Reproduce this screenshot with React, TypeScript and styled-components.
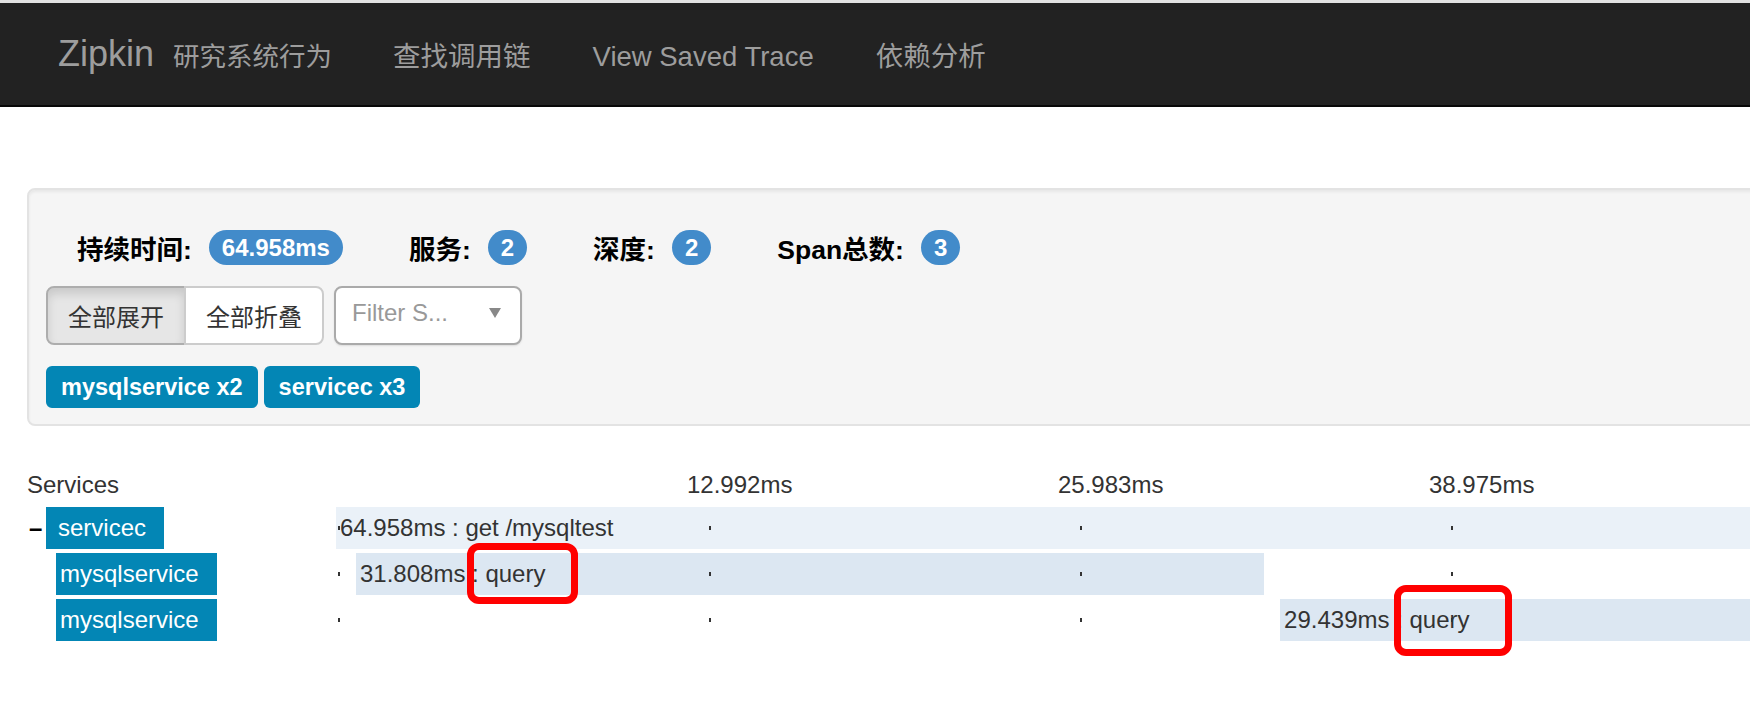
import React from 'react';
import styled, { createGlobalStyle } from 'styled-components';

const TOTAL = 64.958;
const SCALE = 1855 / TOTAL;
const TICKS = [0, 12.992, 25.983, 38.975, 51.966];

type Span = {
  service: string;
  depth: number;
  start: number;
  duration: number;
  label: string;
  tone: 'light' | 'mid';
};

const spans: Span[] = [
  { service: 'servicec', depth: 0, start: 0, duration: 64.958, label: '64.958ms : get /mysqltest', tone: 'light' },
  { service: 'mysqlservice', depth: 1, start: 0.7, duration: 31.808, label: '31.808ms : query', tone: 'mid' },
  { service: 'mysqlservice', depth: 1, start: 33.06, duration: 29.439, label: '29.439ms : query', tone: 'mid' },
];

const stats = [
  { label: '持续时间:', value: '64.958ms' },
  { label: '服务:', value: '2' },
  { label: '深度:', value: '2' },
  { label: 'Span总数:', value: '3' },
];

const App = () => {
  return (
    <>
      <GlobalStyle />
      <TopStrip />
      <Navbar>
        <Brand>Zipkin</Brand>
        <Subtitle>研究系统行为</Subtitle>
        <NavLinks>
          <NavLink>查找调用链</NavLink>
          <NavLink>View Saved Trace</NavLink>
          <NavLink>依赖分析</NavLink>
        </NavLinks>
      </Navbar>

      <Main>
        <Panel>
          <StatsRow>
            {stats.map((s) => (
              <StatItem key={s.label}>
                <StatLabel>{s.label}</StatLabel>
                <Badge>{s.value}</Badge>
              </StatItem>
            ))}
          </StatsRow>
          <Controls>
            <BtnGroup>
              <Btn $active>全部展开</Btn>
              <Btn>全部折叠</Btn>
            </BtnGroup>
            <FilterSelect>
              <span>Filter S...</span>
              <Caret />
            </FilterSelect>
          </Controls>
          <Tags>
            <Tag>mysqlservice x2</Tag>
            <Tag>servicec x3</Tag>
          </Tags>
        </Panel>

        <Trace>
          <HeaderRow>
            <ServiceCol>Services</ServiceCol>
            <TimeCell>
              {TICKS.slice(1, 4).map((t) => (
                <TickLabel key={t} style={{ left: t * SCALE - 20 }}>
                  {t.toFixed(3)}ms
                </TickLabel>
              ))}
            </TimeCell>
          </HeaderRow>

          <Rows>
            {spans.map((s, i) => (
              <Row key={i}>
                <ServiceCol>
                  {s.depth === 0 ? <Toggle>–</Toggle> : null}
                  <ServiceName $depth={s.depth}>{s.service}</ServiceName>
                </ServiceCol>
                <TimeCell>
                  <Bar
                    $tone={s.tone}
                    style={{ left: s.start * SCALE, width: s.duration * SCALE }}
                  />
                  {TICKS.map((t) => (
                    <Tick key={t} style={{ left: 2 + t * SCALE }} />
                  ))}
                  <BarText style={{ left: s.start * SCALE }}>{s.label}</BarText>
                </TimeCell>
              </Row>
            ))}
            <Mark style={{ left: 440, top: 36, width: 111, height: 61 }} />
            <Mark style={{ left: 1367, top: 78, width: 118, height: 71 }} />
          </Rows>
        </Trace>
      </Main>
    </>
  );
};

export default App;

const GlobalStyle = createGlobalStyle`
  html {
    overflow: hidden;
  }
  body {
    margin: 0;
    min-height: 706px;
    background: #fff;
    font-family: "Liberation Sans", "Noto Sans CJK SC", sans-serif;
    color: #333;
  }
`;

const TopStrip = styled.div`
  height: 3px;
  background: #e2e2e2;
`;

const Navbar = styled.nav`
  box-sizing: border-box;
  height: 104px;
  padding-left: 58px;
  background: #222;
  border-bottom: 2px solid #080808;
  color: #9d9d9d;
  font-size: 27px;
  line-height: 102px;
  white-space: nowrap;
  overflow: hidden;
`;

const Brand = styled.span`
  font-size: 36px;
  margin-right: 19px;
`;

const Subtitle = styled.span`
  font-size: 26.5px;
`;

const NavLinks = styled.span`
  margin-left: 30px;
`;

const NavLink = styled.a`
  font-size: 27.5px;
  padding: 0 31px;
`;

const Main = styled.div`
  padding-left: 27px;
`;

const Panel = styled.div`
  margin-top: 81px;
  margin-right: -40px;
  padding: 40px 17px 16px;
  background: #f5f5f5;
  border: 2px solid #e3e3e3;
  border-radius: 8px;
  box-shadow: inset 0 2px 3px rgba(0, 0, 0, 0.06);
`;

const StatsRow = styled.div`
  display: flex;
  align-items: center;
  gap: 66px;
  margin-left: 31px;
  height: 35px;
`;

const StatItem = styled.div`
  display: flex;
  align-items: center;
`;

const StatLabel = styled.span`
  font-size: 26.5px;
  font-weight: bold;
  color: #000;
`;

const Badge = styled.span`
  display: inline-flex;
  align-items: center;
  justify-content: center;
  height: 35px;
  min-width: 39px;
  box-sizing: border-box;
  margin-left: 17px;
  padding: 0 13px;
  border-radius: 18px;
  background: #428bca;
  color: #fff;
  font-size: 24px;
  font-weight: bold;
`;

const Controls = styled.div`
  display: flex;
  gap: 10px;
  margin-top: 21px;
`;

const BtnGroup = styled.div`
  display: flex;
`;

const Btn = styled.button<{ $active?: boolean }>`
  height: 59px;
  padding: 0 20px;
  font-family: inherit;
  font-size: 24px;
  color: #333;
  background: ${(p) => (p.$active ? '#e6e6e6' : '#fff')};
  border: 2px solid ${(p) => (p.$active ? '#adadad' : '#ccc')};
  box-shadow: ${(p) => (p.$active ? 'inset 0 6px 10px rgba(0, 0, 0, 0.125)' : 'none')};
  border-radius: 8px 0 0 8px;

  & + & {
    margin-left: -2px;
    border-radius: 0 8px 8px 0;
  }
`;

const FilterSelect = styled.div`
  display: flex;
  align-items: center;
  justify-content: space-between;
  box-sizing: border-box;
  width: 188px;
  height: 59px;
  padding: 0 19px 6px 16px;
  background: #fff;
  border: 2px solid #aaa;
  border-radius: 8px;
  box-shadow: 0 1px 2px rgba(0, 0, 0, 0.1);
  font-size: 24px;
  color: #999;
`;

const Caret = styled.span`
  width: 0;
  height: 0;
  border-left: 6px solid transparent;
  border-right: 6px solid transparent;
  border-top: 10px solid #888;
`;

const Tags = styled.div`
  display: flex;
  gap: 6px;
  margin-top: 21px;
`;

const Tag = styled.span`
  height: 42px;
  line-height: 42px;
  padding: 0 15px;
  border-radius: 6px;
  background: #0386b5;
  color: #fff;
  font-size: 23.5px;
  font-weight: bold;
`;

const Trace = styled.div`
  margin-top: 38px;
`;

const HeaderRow = styled.div`
  display: flex;
  align-items: center;
  height: 42px;
  font-size: 24px;
  color: #333;
`;

const ServiceCol = styled.div`
  display: flex;
  align-items: center;
  flex: 0 0 309px;
  height: 100%;
`;

const TimeCell = styled.div`
  position: relative;
  flex: 1;
  height: 100%;
`;

const TickLabel = styled.span`
  position: absolute;
  top: 0;
  line-height: 42px;
  white-space: nowrap;
`;

const Rows = styled.div`
  position: relative;
  margin-top: 1px;
`;

const Row = styled.div`
  display: flex;
  height: 42px;
  margin-bottom: 4px;
  font-size: 24px;
`;

const Toggle = styled.span`
  width: 17px;
  padding-left: 2px;
  font-weight: bold;
  color: #000;
`;

const ServiceName = styled.span<{ $depth: number }>`
  height: 42px;
  line-height: 42px;
  margin-left: ${(p) => (p.$depth > 0 ? '29px' : '0')};
  padding: 0 18px 0 ${(p) => (p.$depth > 0 ? '4px' : '12px')};
  background: #0386b5;
  color: #fff;
`;

const Bar = styled.div<{ $tone: 'light' | 'mid' }>`
  position: absolute;
  top: 0;
  bottom: 0;
  background: ${(p) => (p.$tone === 'light' ? '#eaf1f8' : '#dce7f2')};
`;

const Tick = styled.span`
  position: absolute;
  top: 19px;
  width: 2px;
  height: 4px;
  background: #333;
`;

const BarText = styled.span`
  position: absolute;
  top: 0;
  padding-left: 4px;
  line-height: 42px;
  white-space: nowrap;
  color: #333;
`;

const Mark = styled.div`
  position: absolute;
  box-sizing: border-box;
  border: 7px solid #ff0000;
  border-radius: 12px;
`;
